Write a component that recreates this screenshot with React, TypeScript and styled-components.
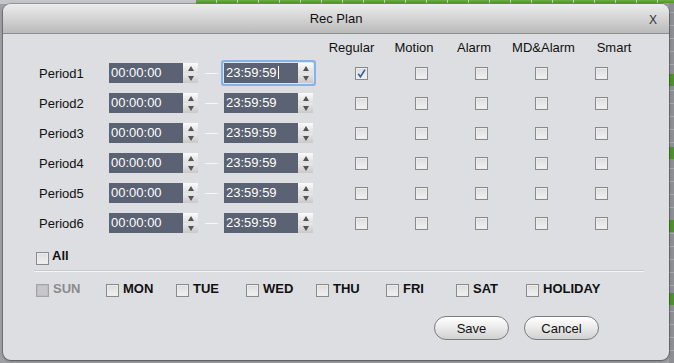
import { styled, createGlobalStyle } from "styled-components";

const GlobalStyle = createGlobalStyle`
  html, body {
    margin: 0;
    padding: 0;
  }
  body {
    font-family: "Liberation Sans", Arial, sans-serif;
    background-color: #a4a5a9;
  }
`;

const Desktop = styled.div`
  width: 674px;
  height: 363px;
  box-sizing: border-box;
  padding: 4px 5px 3px 3px;
  background:
    repeating-linear-gradient(90deg, transparent 0 20px, rgba(255, 255, 255, 0.55) 20px 21px) 196px 0 / 478px 3px no-repeat,
    linear-gradient(#66b146, #4d9231) 196px 0 / 478px 3px no-repeat,
    repeating-linear-gradient(180deg, transparent 0 1px, #4f8f2f 1px 13px, transparent 13px 73px) right 0 top 73px / 5px 100% no-repeat,
    repeating-linear-gradient(180deg, #8e8f94 0 12px, #a8a9ad 12px 13px) right top / 5px 100% no-repeat,
    linear-gradient(#c4c5c8, #c4c5c8) 0 0 / 196px 4px no-repeat,
    #9fa0a4;
`;

const Dialog = styled.div`
  height: 100%;
  display: flex;
  flex-direction: column;
  background-color: #dddee1;
  border-radius: 8px;
  overflow: hidden;
  box-shadow: 0 0 0 1px rgba(0, 0, 0, 0.2), 0 1px 3px rgba(0, 0, 0, 0.35);
`;

const TitleBar = styled.div`
  height: 29px;
  flex: none;
  display: grid;
  grid-template-columns: 1fr auto 1fr;
  align-items: center;
  background: linear-gradient(#ececec, #d6d6d6 45%, #bababa);
  border-bottom: 1px solid #8d8d8d;
`;

const Title = styled.div`
  grid-column: 2;
  font-size: 13px;
  color: #111;
`;

const Close = styled.button`
  grid-column: 3;
  justify-self: end;
  margin: 2px 12px 0 0;
  padding: 0;
  border: 0;
  background: none;
  font-family: inherit;
  font-size: 12px;
  color: #333;
  cursor: pointer;
`;

const Body = styled.div`
  flex: 1;
  display: flex;
  flex-direction: column;
  padding: 0 25px 0 31px;
`;

const Rows = styled.div`
  display: flex;
  flex-direction: column;
  gap: 4px;
  margin-left: 5px;
`;

const HeaderRow = styled.div`
  height: 26px;
  margin-bottom: -4px;
  display: grid;
  grid-template-columns: 282px 61px 64px 56px 83px 58px;
  align-items: center;
  font-size: 13px;
  color: #111;
`;

const HeaderCell = styled.div`
  text-align: center;
  white-space: nowrap;
`;

const PeriodRow = styled.div`
  height: 26px;
  display: grid;
  grid-template-columns: 70px 89px 26px 89px 18px repeat(5, 60px);
  align-items: center;
`;

const PeriodLabel = styled.div`
  font-size: 13px;
  color: #111;
`;

const Field = styled.div<{ $focused?: boolean }>`
  display: flex;
  width: 89px;
  height: 20px;
  border-radius: 1px;
  box-shadow: ${(p) => (p.$focused ? "0 0 0 1px #d8e6f8, 0 0 0 3px #86b2ec" : "none")};
`;

const TimeValue = styled.div`
  flex: 0 0 74px;
  box-sizing: border-box;
  padding-left: 2px;
  background-color: #5b6273;
  color: #fff;
  font-size: 13px;
  line-height: 20px;
  white-space: nowrap;
`;

const Caret = styled.span`
  display: inline-block;
  width: 1px;
  height: 13px;
  margin-left: 1px;
  background-color: #fff;
  vertical-align: -2px;
`;

const Spin = styled.div`
  flex: 0 0 15px;
  display: flex;
  flex-direction: column;
`;

const SpinHalf = styled.div<{ $down?: boolean }>`
  flex: 1;
  display: flex;
  align-items: center;
  justify-content: center;
  background: ${(p) =>
    p.$down ? "linear-gradient(#e9e9e9, #c9c9c9)" : "linear-gradient(#fbfbfb, #dedede)"};
  &::after {
    content: "";
    border-left: 3.5px solid transparent;
    border-right: 3.5px solid transparent;
    ${(p) => (p.$down ? "border-top: 5px solid #555;" : "border-bottom: 5px solid #555;")}
  }
`;

const Dash = styled.div`
  justify-self: center;
  width: 13px;
  height: 1px;
  margin-top: 1px;
  background-color: #f7f7f7;
`;

const Box = styled.span<{ $disabled?: boolean }>`
  flex: none;
  display: inline-flex;
  align-items: center;
  justify-content: center;
  box-sizing: border-box;
  width: 13px;
  height: 13px;
  border: 1px solid ${(p) => (p.$disabled ? "#a3a3a3" : "#8a8a8a")};
  background: ${(p) => (p.$disabled ? "#c7c7c9" : "linear-gradient(#dcdcdc, #f2f2f2)")};
  box-shadow: inset 0 0 0 1px ${(p) => (p.$disabled ? "#bdbdbf" : "#ececec")};
  svg {
    width: 11px;
    height: 11px;
  }
`;

const BoxCell = styled.div`
  justify-self: center;
  display: flex;
`;

const AllRow = styled.label`
  display: flex;
  align-items: flex-start;
  gap: 3px;
  height: 17px;
  margin: 12px 0 0 2px;
  font-size: 13px;
  font-weight: bold;
  color: #111;
  line-height: 15px;
  ${Box} {
    margin-top: 4px;
  }
`;

const Separator = styled.div`
  height: 1px;
  margin-top: 6px;
  background-color: #f6f6f6;
  box-shadow: 0 -1px 0 #c9cacd;
`;

const DayRow = styled.div`
  display: flex;
  margin: 9px 0 0 2px;
`;

const Day = styled.label<{ $disabled?: boolean }>`
  flex: 0 0 70px;
  display: flex;
  align-items: flex-start;
  gap: 4px;
  font-size: 13px;
  font-weight: bold;
  line-height: 15px;
  color: ${(p) => (p.$disabled ? "#8b8b8d" : "#111")};
  ${Box} {
    margin-top: 3px;
  }
`;

const Buttons = styled.div`
  display: flex;
  justify-content: flex-end;
  gap: 15px;
  margin-top: 19px;
  padding-right: 45px;
`;

const Button = styled.button`
  width: 75px;
  height: 24px;
  padding: 0;
  border: 1px solid #7b7b7b;
  border-radius: 12px;
  background: linear-gradient(#ffffff, #ececec 45%, #d0d0d0);
  font-family: inherit;
  font-size: 13px;
  color: #111;
`;

function Check({ checked, disabled }: { checked?: boolean; disabled?: boolean }) {
  return (
    <Box $disabled={disabled}>
      {checked && (
        <svg viewBox="0 0 11 11">
          <path d="M2.2 5.8 L4.4 8.8 L9 1.6" fill="none" stroke="#3b5da6" strokeWidth={1.6} />
        </svg>
      )}
    </Box>
  );
}

function TimeSpin({ value, focused }: { value: string; focused?: boolean }) {
  return (
    <Field $focused={focused}>
      <TimeValue>
        {value}
        {focused && <Caret />}
      </TimeValue>
      <Spin>
        <SpinHalf />
        <SpinHalf $down />
      </Spin>
    </Field>
  );
}

const modes = ["Regular", "Motion", "Alarm", "MD&Alarm", "Smart"];
const days = ["SUN", "MON", "TUE", "WED", "THU", "FRI", "SAT", "HOLIDAY"];

export default function App() {
  return (
    <>
      <GlobalStyle />
      <Desktop>
        <Dialog>
          <TitleBar>
            <Title>Rec Plan</Title>
            <Close>X</Close>
          </TitleBar>
          <Body>
            <Rows>
              <HeaderRow>
                <span />
                {modes.map((m) => (
                  <HeaderCell key={m}>{m}</HeaderCell>
                ))}
              </HeaderRow>
              {[1, 2, 3, 4, 5, 6].map((n) => (
                <PeriodRow key={n}>
                  <PeriodLabel>Period{n}</PeriodLabel>
                  <TimeSpin value="00:00:00" />
                  <Dash />
                  <TimeSpin value="23:59:59" focused={n === 1} />
                  <span />
                  {modes.map((m, i) => (
                    <BoxCell key={m}>
                      <Check checked={n === 1 && i === 0} />
                    </BoxCell>
                  ))}
                </PeriodRow>
              ))}
            </Rows>
            <AllRow>
              <Check />
              All
            </AllRow>
            <Separator />
            <DayRow>
              {days.map((d, i) => (
                <Day key={d} $disabled={i === 0}>
                  <Check disabled={i === 0} />
                  {d}
                </Day>
              ))}
            </DayRow>
            <Buttons>
              <Button>Save</Button>
              <Button>Cancel</Button>
            </Buttons>
          </Body>
        </Dialog>
      </Desktop>
    </>
  );
}
